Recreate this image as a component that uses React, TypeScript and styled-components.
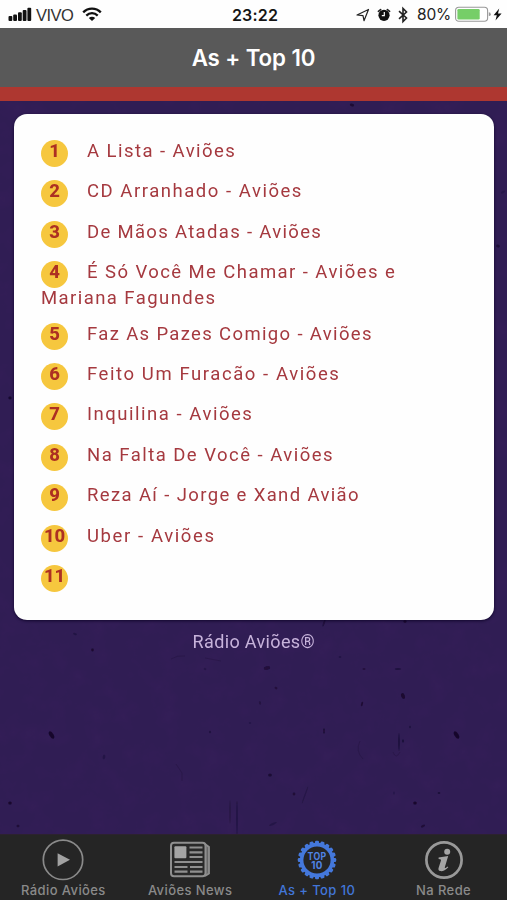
import React from "react";
import styled, { createGlobalStyle } from "styled-components";

const GlobalStyle = createGlobalStyle`
  * { box-sizing: border-box; }
  html, body { margin: 0; padding: 0; }
  body { font-family: Inter, "Liberation Sans", sans-serif; overflow: hidden; }
`;

const Screen = styled.div`
  width: 507px;
  height: 900px;
  display: flex;
  flex-direction: column;
  overflow: hidden;
  background: #252525;
`;

const StatusBar = styled.div`
  height: 28px;
  flex: none;
  display: grid;
  grid-template-columns: 1fr auto 1fr;
  align-items: center;
  background: #fefefe;
  color: #151515;
  padding: 1px 5px 0 8px;
`;

const StatusGroup = styled.div<{ $end?: boolean }>`
  display: flex;
  align-items: center;
  justify-content: ${(p) => (p.$end ? "flex-end" : "flex-start")};
`;

const Carrier = styled.span`
  font: 400 16.5px/20px "Liberation Sans", sans-serif;
  margin: 0 9px 0 4px;
  color: #333;
  letter-spacing: -0.55px;
`;

const Clock = styled.span`
  font: 600 16px/20px Inter, sans-serif;
  letter-spacing: 0.2px;
`;

const Percent = styled.span`
  font: 400 15.5px/20px Inter, sans-serif;
  margin: 0 4px 0 7px;
  letter-spacing: -0.2px;
  color: #222;
`;

const Header = styled.header`
  height: 59px;
  flex: none;
  display: flex;
  align-items: center;
  justify-content: center;
  background: #595959;
  color: #fff;
  font: 600 22.3px/28px Inter, sans-serif;
  letter-spacing: -0.1px;
`;

const Stripe = styled.div`
  height: 13.5px;
  flex: none;
  background: #ae3730;
`;

const Content = styled.main`
  flex: 1;
  position: relative;
  padding: 13.5px 13.5px 0 14px;
  background: #301d54;
`;

const Texture = styled.svg`
  position: absolute;
  inset: 0;
  width: 100%;
  height: 100%;
`;

const Card = styled.ol`
  position: relative;
  list-style: none;
  margin: 0;
  padding: 26px 27px 0;
  height: 505.5px;
  border-radius: 13px;
  background: #fefefe;
  box-shadow: 0 1px 3px rgba(10, 0, 35, 0.8);
`;

const Song = styled.li<{ $tracking: number }>`
  padding-top: 1px;
  margin-bottom: 13.4px;
  font: 400 18.5px/21px Roboto, sans-serif;
  letter-spacing: ${(p) => p.$tracking}px;
  color: #a5393f;
`;

const Rank = styled.span`
  display: inline-block;
  vertical-align: top;
  width: 27px;
  height: 27px;
  margin: -1px 19px 0 0;
  border-radius: 50%;
  background: #f6c73e;
  color: #ad3022;
  font-weight: 800;
  line-height: 23px;
  text-align: center;
  letter-spacing: -0.2px;
`;

const Credit = styled.p`
  position: relative;
  margin: 10px 0 0;
  text-align: center;
  font: 400 18px/24px Roboto, sans-serif;
  letter-spacing: 0.35px;
  color: #c7b3db;
`;

const TabBar = styled.nav`
  height: 66px;
  flex: none;
  display: grid;
  grid-template-columns: repeat(4, 1fr);
  background: #252525;
  border-top: 1px solid #2c222f;
`;

const Tab = styled.div<{ $active?: boolean }>`
  display: flex;
  flex-direction: column;
  align-items: center;
  padding-top: 4px;
  color: ${(p) => (p.$active ? "#4276d8" : "#8a8a8a")};
  font: 500 13px/17px Inter, sans-serif;
  letter-spacing: 0.4px;
  white-space: nowrap;

  svg { display: block; margin-bottom: 1px; }
`;

const songs = [
  { title: "A Lista - Aviões", tracking: 1.45 },
  { title: "CD Arranhado - Aviões", tracking: 1.53 },
  { title: "De Mãos Atadas - Aviões", tracking: 1.32 },
  { title: "É Só Você Me Chamar - Aviões e Mariana Fagundes", tracking: 1.43 },
  { title: "Faz As Pazes Comigo - Aviões", tracking: 1.35 },
  { title: "Feito Um Furacão - Aviões", tracking: 1.58 },
  { title: "Inquilina - Aviões", tracking: 1.52 },
  { title: "Na Falta De Você - Aviões", tracking: 1.47 },
  { title: "Reza Aí - Jorge e Xand Avião", tracking: 1.37 },
  { title: "Uber - Aviões", tracking: 1.6 },
  { title: "", tracking: 1.4 },
];

const Signal = () => (
  <svg width="24" height="15" viewBox="0 0 24 15" fill="#111">
    <rect x="0.5" y="9" width="3.8" height="5" rx="1" />
    <rect x="5.2" y="7.5" width="3.8" height="6.5" rx="1" />
    <rect x="10" y="5.3" width="3.8" height="8.7" rx="1" />
    <rect x="14.7" y="3" width="3.8" height="11" rx="1" />
    <rect x="19.4" y="0.8" width="3.8" height="13.2" rx="1" />
  </svg>
);

const Wifi = () => (
  <svg width="20" height="15" viewBox="0 0 20 15" fill="none" stroke="#111" strokeWidth="2.3">
    <path d="M1.2 5.4C6.1.3 13.9.3 18.8 5.4" />
    <path d="M4.3 8.6C7.6 5.4 12.4 5.4 15.7 8.6" />
    <path d="M10 14 6.8 10.9C8.7 9.2 11.3 9.2 13.2 10.9Z" fill="#111" stroke="none" />
  </svg>
);

const StatusIcons = () => (
  <svg width="54" height="18" viewBox="0 0 54 18" fill="none" stroke="#222">
    <path d="M1 9 12.5 3.5 8 14.7 7 9.6Z" strokeWidth="1.2" strokeLinejoin="round" />
    <circle cx="28" cy="9.3" r="5.6" fill="#111" stroke="none" />
    <path d="M22.4 5.3 24.6 3.6M31.4 3.6 33.6 5.3" strokeWidth="1.7" strokeLinecap="round" />
    <path d="M28.3 6v3.6H25.8" stroke="#fff" strokeWidth="1.2" />
    <path d="M43 5.2 50.5 12 47 15.5V2.5L50.5 6 43 12.8" strokeWidth="1.6" />
  </svg>
);

const Battery = () => (
  <svg width="47" height="17" viewBox="0 0 47 17">
    <rect x="0.6" y="1.2" width="32" height="14" rx="3.2" fill="#fff" stroke="#999" strokeWidth="1.1" />
    <rect x="2.4" y="3" width="22.3" height="10.4" rx="1.2" fill="#76ce68" />
    <path d="M33.8 6.3q2 .1 2 1.9t-2 1.9z" fill="#999" />
    <path d="M44.2 2.6 38.6 9.2h3.2l-1.3 5.2L46.6 7.5H43z" fill="#111" />
  </svg>
);

const PlayIcon = () => (
  <svg width="42" height="42" viewBox="0 0 42 42">
    <circle cx="21" cy="20.8" r="19.7" fill="none" stroke="#8a8a8a" strokeWidth="1.7" />
    <path d="M15.6 14.2 28 20.8 15.6 27.4z" fill="#a2a2a2" />
  </svg>
);

const NewsIcon = () => (
  <svg width="42" height="42" viewBox="0 0 42 42" fill="none" stroke="#8f8f8f">
    <path d="M36 5 40 8V34.5L36 37" strokeWidth="1.8" fill="#686868" />
    <rect x="2" y="3.8" width="34.5" height="33.5" rx="3" strokeWidth="2" fill="#292929" />
    <rect x="5.4" y="7.2" width="12" height="12" rx="1" fill="#a4a4a4" stroke="none" />
    <path d="M20.5 8.5h13M20.5 13.3h13M20.5 18h13M5.5 23h28M5.5 28h13M21 28h12.5M5.5 32.7h13M21 32.7h12.5" strokeWidth="2.2" />
  </svg>
);

const teeth = Array.from({ length: 20 }, (_, i) => i * 18);

const TopTenIcon = () => (
  <svg width="42" height="42" viewBox="0 0 42 42">
    <g fill="#4478dc">
      {teeth.map((angle) => (
        <rect key={angle} x="19" y="1.8" width="4" height="5" rx="1.2" transform={`rotate(${angle} 21 21)`} />
      ))}
    </g>
    <circle cx="21" cy="21" r="15.4" fill="none" stroke="#4478dc" strokeWidth="3.6" />
    <g fill="#4f83e4" textAnchor="middle" fontFamily="Inter, sans-serif" fontWeight="700" fontSize="9.8">
      <text x="21" y="21" textLength="19" lengthAdjust="spacingAndGlyphs">TOP</text>
      <text x="21" y="30.3">10</text>
    </g>
  </svg>
);

const InfoIcon = () => (
  <svg width="42" height="42" viewBox="0 0 42 42">
    <circle cx="21" cy="21" r="17.6" fill="none" stroke="#999" strokeWidth="2.7" />
    <circle cx="24.2" cy="12.8" r="3" fill="#a4a4a4" />
    <path d="M15.6 18.5c3.4-.6 6.2-1.1 9.6-1.6l-3.3 11c-.5 1.5.4 1.4 2.6-.5l.8.8c-2.8 3.2-5.6 4.2-7.9 3.9-2-.3-2.3-1.9-1.7-3.7l2.2-6.7c.3-1.1.1-1.6-2.3-1.7z" fill="#a4a4a4" />
  </svg>
);

type Fleck = [number, number, number, number, number, number];

const flecks: Fleck[] = [
  [51.5, 634, 2, 4, -32, 0.8], [456.5, 634, 2, 4, -32, 0.8],
  [10, 702, 1.8, 1.5, 0, 0.75], [415, 702, 1.8, 1.5, 0, 0.75],
  [18, 725, 1.5, 1.2, 0, 0.55], [423, 725, 2.3, 1.2, -28, 0.55],
  [267, 567, 3.2, 1.8, -15, 0.5], [276, 587, 1.4, 1.1, 30, 0.5],
  [260, 602, 1, 1.7, -15, 0.35], [362, 603, 1, 2.2, 15, 0.6],
  [403, 595, 1.8, 3, -20, 0.65], [364, 568, 1.4, 1.1, 0, 0.5],
  [398, 568, 3.2, 1.1, 0, 0.4], [324, 630, 0.9, 2.7, 0, 0.55],
  [399, 641, 0.9, 9, 0, 0.4], [403, 640, 1, 1.8, 0, 0.45],
  [104, 656, 1.3, 2.4, 10, 0.28], [270, 674, 1.8, 1.5, 0, 0.6],
  [294, 693, 1.3, 1.4, 0, 0.55], [305, 694, 0.6, 9, 20, 0.25],
  [237, 717, 0.8, 17, 0, 0.35], [230, 711, 0.8, 12, 0, 0.2],
  [273, 723, 4, 1, -25, 0.25], [439, 692, 1.3, 1.1, 0, 0.45],
  [410, 626, 1, 1.3, 0, 0.35], [210, 631, 1.1, 1.3, 0, 0.35],
  [92.5, 549, 1.4, 1.4, 0, 0.65], [75, 533, 2, 1, 15, 0.3],
  [324, 522, 0.9, 3.6, 20, 0.45], [405, 520.5, 1.5, 1.4, 0, 0.65],
  [10, 297, 1.6, 1.4, 0, 0.75], [352, 4, 2.2, 1.4, 15, 0.6],
  [498, 145, 1.8, 1.4, 20, 0.55], [503, 91, 2.4, 1.1, -30, 0.2],
  [340, 556, 1.3, 1.1, 0, 0.3], [205, 568, 1.3, 1.1, 20, 0.25],
  [250, 622, 1.2, 1, 0, 0.25], [394, 692, 0.9, 1.6, 0, 0.25],
];

const PaperTexture = () => (
  <Texture viewBox="0 0 507 733.5" aria-hidden="true">
    <defs>
      <filter id="mottle" x="0" y="0" width="100%" height="100%">
        <feTurbulence type="fractalNoise" baseFrequency="0.045" numOctaves="4" seed="8" />
        <feColorMatrix values="0 0 0 0 0.08  0 0 0 0 0.02  0 0 0 0 0.16  0.9 0 0 0 -0.36" />
      </filter>
      <filter id="soften"><feGaussianBlur stdDeviation="0.45" /></filter>
    </defs>
    <rect width="507" height="733.5" filter="url(#mottle)" opacity="0.28" />
    <g fill="#10021f" filter="url(#soften)">
      {flecks.map(([x, y, rx, ry, angle, alpha]) => (
        <ellipse key={`${x}-${y}`} cx={x} cy={y} rx={rx} ry={ry} opacity={alpha} transform={`rotate(${angle} ${x} ${y})`} />
      ))}
    </g>
    <path d="M171 558q6-4 14-3M360 640q-5 10 3 18M393 651q3 8 7 0M176 663l6 9v8M205 557l16 3" fill="none" stroke="#180828" strokeWidth="1" opacity="0.22" />
  </Texture>
);

export default function App() {
  return (
    <>
      <GlobalStyle />
      <Screen>
        <StatusBar>
          <StatusGroup>
            <Signal />
            <Carrier>VIVO</Carrier>
            <Wifi />
          </StatusGroup>
          <Clock>23:22</Clock>
          <StatusGroup $end>
            <StatusIcons />
            <Percent>80%</Percent>
            <Battery />
          </StatusGroup>
        </StatusBar>
        <Header>As + Top 10</Header>
        <Stripe />
        <Content>
          <PaperTexture />
          <Card>
            {songs.map(({ title, tracking }, i) => (
              <Song key={i} $tracking={tracking}>
                <Rank>{i + 1}</Rank>
                {title}
              </Song>
            ))}
          </Card>
          <Credit>Rádio Aviões®</Credit>
        </Content>
        <TabBar>
          <Tab><PlayIcon />Rádio Aviões</Tab>
          <Tab><NewsIcon />Aviões News</Tab>
          <Tab $active><TopTenIcon />As + Top 10</Tab>
          <Tab><InfoIcon />Na Rede</Tab>
        </TabBar>
      </Screen>
    </>
  );
}
